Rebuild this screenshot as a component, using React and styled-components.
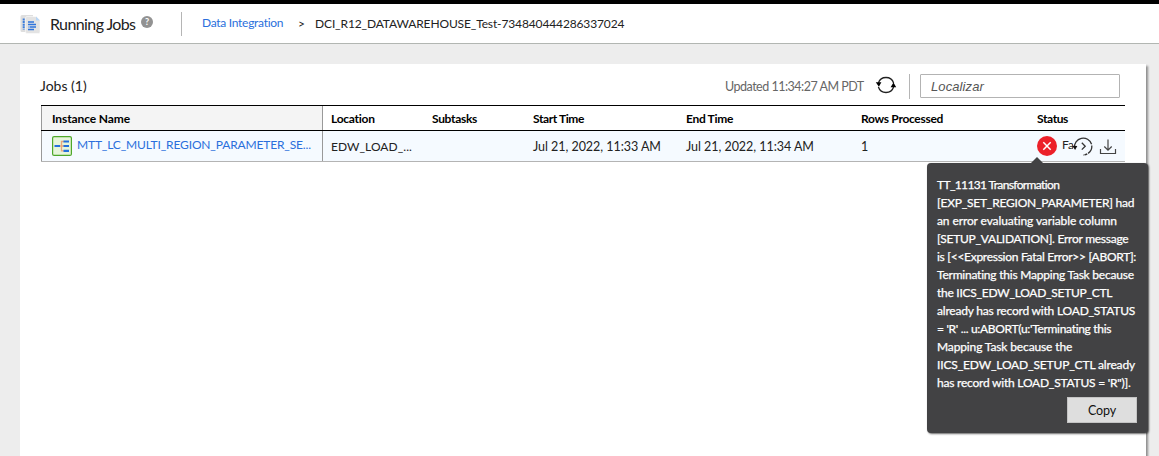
import React from "react";
import styled, { createGlobalStyle } from "styled-components";

const GlobalStyle = createGlobalStyle`
  *, *::before, *::after { box-sizing: border-box; }
  body { margin: 0; background: #ededed; overflow: hidden; font-family: Lato, "Open Sans", sans-serif; color: #222; }
`;

const Page = styled.div`
  height: 456px;
  display: flex;
  flex-direction: column;
  border-top: 4px solid #000;
`;

const Header = styled.header`
  flex: none;
  height: 40px;
  padding: 0 20px;
  display: flex;
  align-items: center;
  background: #fff;
  border-bottom: 1px solid #b2b6b2;
`;

const Title = styled.h1`
  margin: 1px 0 0 9px;
  width: 91px;
  font-size: 16px;
  font-weight: 400;
  line-height: 24px;
  letter-spacing: -0.6px;
  white-space: nowrap;
`;

const HelpBadge = styled.span`
  width: 12px;
  height: 12px;
  margin-top: -4px;
  border-radius: 50%;
  background: #929292;
  color: #fff;
  font-size: 9px;
  font-weight: 700;
  line-height: 12px;
  text-align: center;
`;

const HeaderRule = styled.div`
  width: 1px;
  height: 24px;
  margin: 0 20px 0 28px;
  background: #b5b5b5;
`;

const Crumbs = styled.nav`
  display: flex;
  align-items: center;
  font-size: 12px;
  line-height: 18px;
  white-space: nowrap;
`;

const CrumbLink = styled.a`
  width: 96px;
  margin-top: -2px;
  color: #2a6fdc;
  letter-spacing: -0.28px;
`;

const CrumbArrow = styled.span`
  width: 17px;
  font-size: 12px;
`;

const CrumbCurrent = styled.span`
  letter-spacing: -0.13px;
`;

const Panel = styled.main`
  flex: 1;
  margin: 20px 13px 0 20px;
  padding: 9px 21px 0;
  background: #fff;
  box-shadow: 2px 2px 2px rgba(0, 0, 0, 0.4);
`;

const Toolbar = styled.div`
  height: 32px;
  display: flex;
  align-items: flex-start;
`;

const JobCount = styled.h2`
  flex: 1;
  margin: 4px 0 0 -1px;
  font-size: 14px;
  font-weight: 400;
  line-height: 18px;
`;

const Updated = styled.span`
  width: 150px;
  margin-top: 5px;
  color: #666;
  font-size: 12.5px;
  line-height: 18px;
  letter-spacing: -0.5px;
  white-space: nowrap;
`;

const RefreshIcon = styled.svg`
  display: block;
  width: 22px;
  height: 22px;
  margin-top: 1px;
`;

const ToolbarRule = styled.div`
  width: 1px;
  height: 25px;
  margin: 1px 10px 0 12px;
  background: #b5b5b5;
`;

const Search = styled.input`
  width: 200px;
  height: 24px;
  margin: 1px 5px 0 0;
  padding: 0 10px;
  border: 1px solid #b3b3b3;
  border-radius: 1px;
  outline: 0;
  font: italic 13px "Liberation Sans", Arial, sans-serif;
  letter-spacing: 0.1px;
  &::placeholder { color: #555; opacity: 1; }
`;

const Table = styled.div`
  width: 1084px;
  border-top: 1px solid #000;
`;

const Row = styled.div`
  display: grid;
  grid-template-columns: 282px 101px 101px 153px 175px 176px 96px;
  height: ${(p) => (p.$head ? 25 : 31)}px;
  background: ${(p) => (p.$head ? "#fff" : "#f5faff")};
  border-bottom: 1px solid ${(p) => (p.$head ? "#000" : "#b4b4b4")};
`;

const Cell = styled.div`
  display: flex;
  align-items: center;
  padding-left: 8px;
  white-space: nowrap;
  font-size: ${(p) => p.$size || 12}px;
  letter-spacing: ${(p) => p.$track || 0}px;
`;

const HeadCell = styled(Cell)`
  color: #000;
  font-weight: 700;
`;

const nameColumn = `
  padding-left: 10px;
  border-left: 1px solid #999;
  border-right: 1px solid #999;
`;

const NameHead = styled(HeadCell)`
  ${nameColumn}
  background: #f4f4f4;
`;

const NameCell = styled(Cell)`
  ${nameColumn}
`;

const JobLink = styled.a`
  margin: -3px 0 0 5px;
  color: #2a6fdc;
  letter-spacing: -0.15px;
`;

const StatusCell = styled(Cell)`
  position: relative;
`;

const StatusText = styled.span`
  margin: -3px 1px 0 5px;
  width: 11px;
  overflow: hidden;
`;

const RerunIcon = styled.svg`
  flex: none;
  width: 22px;
  height: 22px;
  margin-left: -2px;
`;

const DownloadIcon = styled.svg`
  flex: none;
  width: 18px;
  height: 18px;
  margin-left: 5px;
`;

const Tooltip = styled.div`
  position: absolute;
  left: -102px;
  top: 32px;
  z-index: 2;
  width: 221px;
  height: 270px;
  padding: 13px 11px 10px 10px;
  display: flex;
  flex-direction: column;
  background: #424244;
  border-radius: 4px;
  box-shadow: 1px 1px 2px rgba(0, 0, 0, 0.6);
  &::before {
    content: "";
    position: absolute;
    left: 104px;
    top: -6px;
    border: solid transparent;
    border-width: 0 6px 6px;
    border-bottom-color: #424244;
  }
`;

const Message = styled.div`
  flex: 1;
  color: #fff;
  -webkit-text-stroke: 0.25px #fff;
  font-size: 12px;
  line-height: 18px;
  white-space: nowrap;
`;

const MessageLine = styled.div`
  letter-spacing: ${(p) => p.$track}px;
`;

const CopyButton = styled.button`
  align-self: flex-end;
  width: 70px;
  height: 26px;
  padding: 1px 0 0;
  border: 1px solid #c4c4c4;
  background: #dedede;
  color: #111;
  font: 400 12.5px Lato, sans-serif;
  letter-spacing: -0.16px;
`;

const columns = [
  ["Location", -0.25],
  ["Subtasks", -0.31],
  ["Start Time", -0.4],
  ["End Time", -0.32],
  ["Rows Processed", -0.3],
  ["Status", -0.38],
];

const message = [
  ["TT_11131 Transformation", -0.63],
  ["[EXP_SET_REGION_PARAMETER] had", -0.22],
  ["an error evaluating variable column", -0.11],
  ["[SETUP_VALIDATION]. Error message", -0.26],
  ["is [<<Expression Fatal Error>> [ABORT]:", -0.28],
  ["Terminating this Mapping Task because", -0.22],
  ["the IICS_EDW_LOAD_SETUP_CTL", -0.26],
  ["already has record with LOAD_STATUS", -0.2],
  ["= 'R' ... u:ABORT(u:'Terminating this", -0.31],
  ["Mapping Task because the", -0.13],
  ["IICS_EDW_LOAD_SETUP_CTL already", -0.15],
  ["has record with LOAD_STATUS = 'R\")].", -0.22],
];

const JobsLogo = () => (
  <svg width="21" height="20" viewBox="0 0 21 20">
    <path d="M2 1h11v17H2a1.5 1.5 0 0 1-1.5-1.5v-14A1.5 1.5 0 0 1 2 1z" fill="#dedede" />
    <path d="M3.7 4.5v11" stroke="#3b7ddd" strokeWidth="2" strokeDasharray="2 .6" />
    <path d="M7 2.5h9l4 4V18a1.5 1.5 0 0 1-1.5 1.5H7A1.5 1.5 0 0 1 5.5 18V4A1.5 1.5 0 0 1 7 2.5z" fill="#e3e3e3" stroke="#fff" strokeWidth=".5" />
    <path d="M16 2.5l4 4h-4z" fill="#b9d6f5" />
    <path d="M8 8h6M8 10.5h8M10 13h6M8 15.5h6" stroke="#2f74dc" strokeWidth="1.6" />
    <path d="M8 13h2" stroke="#8ab2ec" strokeWidth="1.6" />
  </svg>
);

const MappingIcon = () => (
  <svg width="20" height="20" viewBox="0 0 20 20">
    <rect x=".6" y=".6" width="18.8" height="18.8" rx="1.5" fill="#e6f5da" stroke="#4ea82a" strokeWidth="1.2" />
    <path d="M12 5.5H9.5v9.300H12M8 10h4" fill="none" stroke="#e9a57c" strokeWidth="1.3" />
    <path d="M2.5 10H8M11.5 5.5H17M11.5 10H17M11.5 14.8H17" stroke="#2470dc" strokeWidth="2.2" />
  </svg>
);

const ErrorIcon = () => (
  <svg width="20" height="20" viewBox="0 0 20 20">
    <circle cx="10" cy="10" r="10" fill="#ec2029" />
    <path d="M6.3 6.3l7.4 7.4M13.7 6.3l-7.4 7.4" stroke="#fff" strokeWidth="1.5" />
  </svg>
);

export default function App() {
  return (
    <>
      <GlobalStyle />
      <Page>
        <Header>
          <JobsLogo />
          <Title>Running Jobs</Title>
          <HelpBadge>?</HelpBadge>
          <HeaderRule />
          <Crumbs>
            <CrumbLink>Data Integration</CrumbLink>
            <CrumbArrow>&gt;</CrumbArrow>
            <CrumbCurrent>DCI_R12_DATAWAREHOUSE_Test-734840444286337024</CrumbCurrent>
          </Crumbs>
        </Header>
        <Panel>
          <Toolbar>
            <JobCount>Jobs (1)</JobCount>
            <Updated>Updated 11:34:27 AM PDT</Updated>
            <RefreshIcon viewBox="0 0 22 22">
              <path d="M3.4 9A8 8 0 0 1 18.6 9M18.6 13A8 8 0 0 1 3.4 13" fill="none" stroke="#222" strokeWidth="1.3" />
              <path d="M0.8 8.2h5.600L3.900 12.800zM15.600 13.200h5.600L18.500 8.600z" fill="#000" />
            </RefreshIcon>
            <ToolbarRule />
            <Search placeholder="Localizar" />
          </Toolbar>
          <Table>
            <Row $head>
              <NameHead $track={-0.11}>Instance Name</NameHead>
              {columns.map(([label, track]) => (
                <HeadCell key={label} $track={track}>{label}</HeadCell>
              ))}
            </Row>
            <Row>
              <NameCell>
                <MappingIcon />
                <JobLink>MTT_LC_MULTI_REGION_PARAMETER_SE...</JobLink>
              </NameCell>
              <Cell $track={0.06}>EDW_LOAD_...</Cell>
              <Cell />
              <Cell $size={12.5} $track={-0.04}>Jul 21, 2022, 11:33 AM</Cell>
              <Cell $size={12.5} $track={-0.04}>Jul 21, 2022, 11:34 AM</Cell>
              <Cell $size={12.5}>1</Cell>
              <StatusCell>
                <ErrorIcon />
                <StatusText>Fa</StatusText>
                <RerunIcon viewBox="0 0 22 22">
                  <path d="M2.5 13A8.8 8.8 0 0 1 19.6 9.2" fill="none" stroke="#333" strokeWidth="1.3" />
                  <path d="M19.8 10.5A8.8 8.8 0 0 1 11 20" fill="none" stroke="#333" strokeWidth="1.3" strokeDasharray="9 1 3 1" />
                  <path d="M0.300 10.800l5 .2-2.200 4z" fill="#111" />
                  <path d="M9.8 7.8l3.4 3.4-3.4 3.4" fill="none" stroke="#333" strokeWidth="1.3" />
                </RerunIcon>
                <DownloadIcon viewBox="0 0 18 18">
                  <path d="M1.5 12v4.500h15V12M9 2.5v10.500M5.3 9.5L9 13.2l3.7-3.7" fill="none" stroke="#444" strokeWidth="1.2" />
                </DownloadIcon>
                <Tooltip>
                  <Message>
                    {message.map(([text, track]) => (
                      <MessageLine key={text} $track={track}>{text}</MessageLine>
                    ))}
                  </Message>
                  <CopyButton>Copy</CopyButton>
                </Tooltip>
              </StatusCell>
            </Row>
          </Table>
        </Panel>
      </Page>
    </>
  );
}
